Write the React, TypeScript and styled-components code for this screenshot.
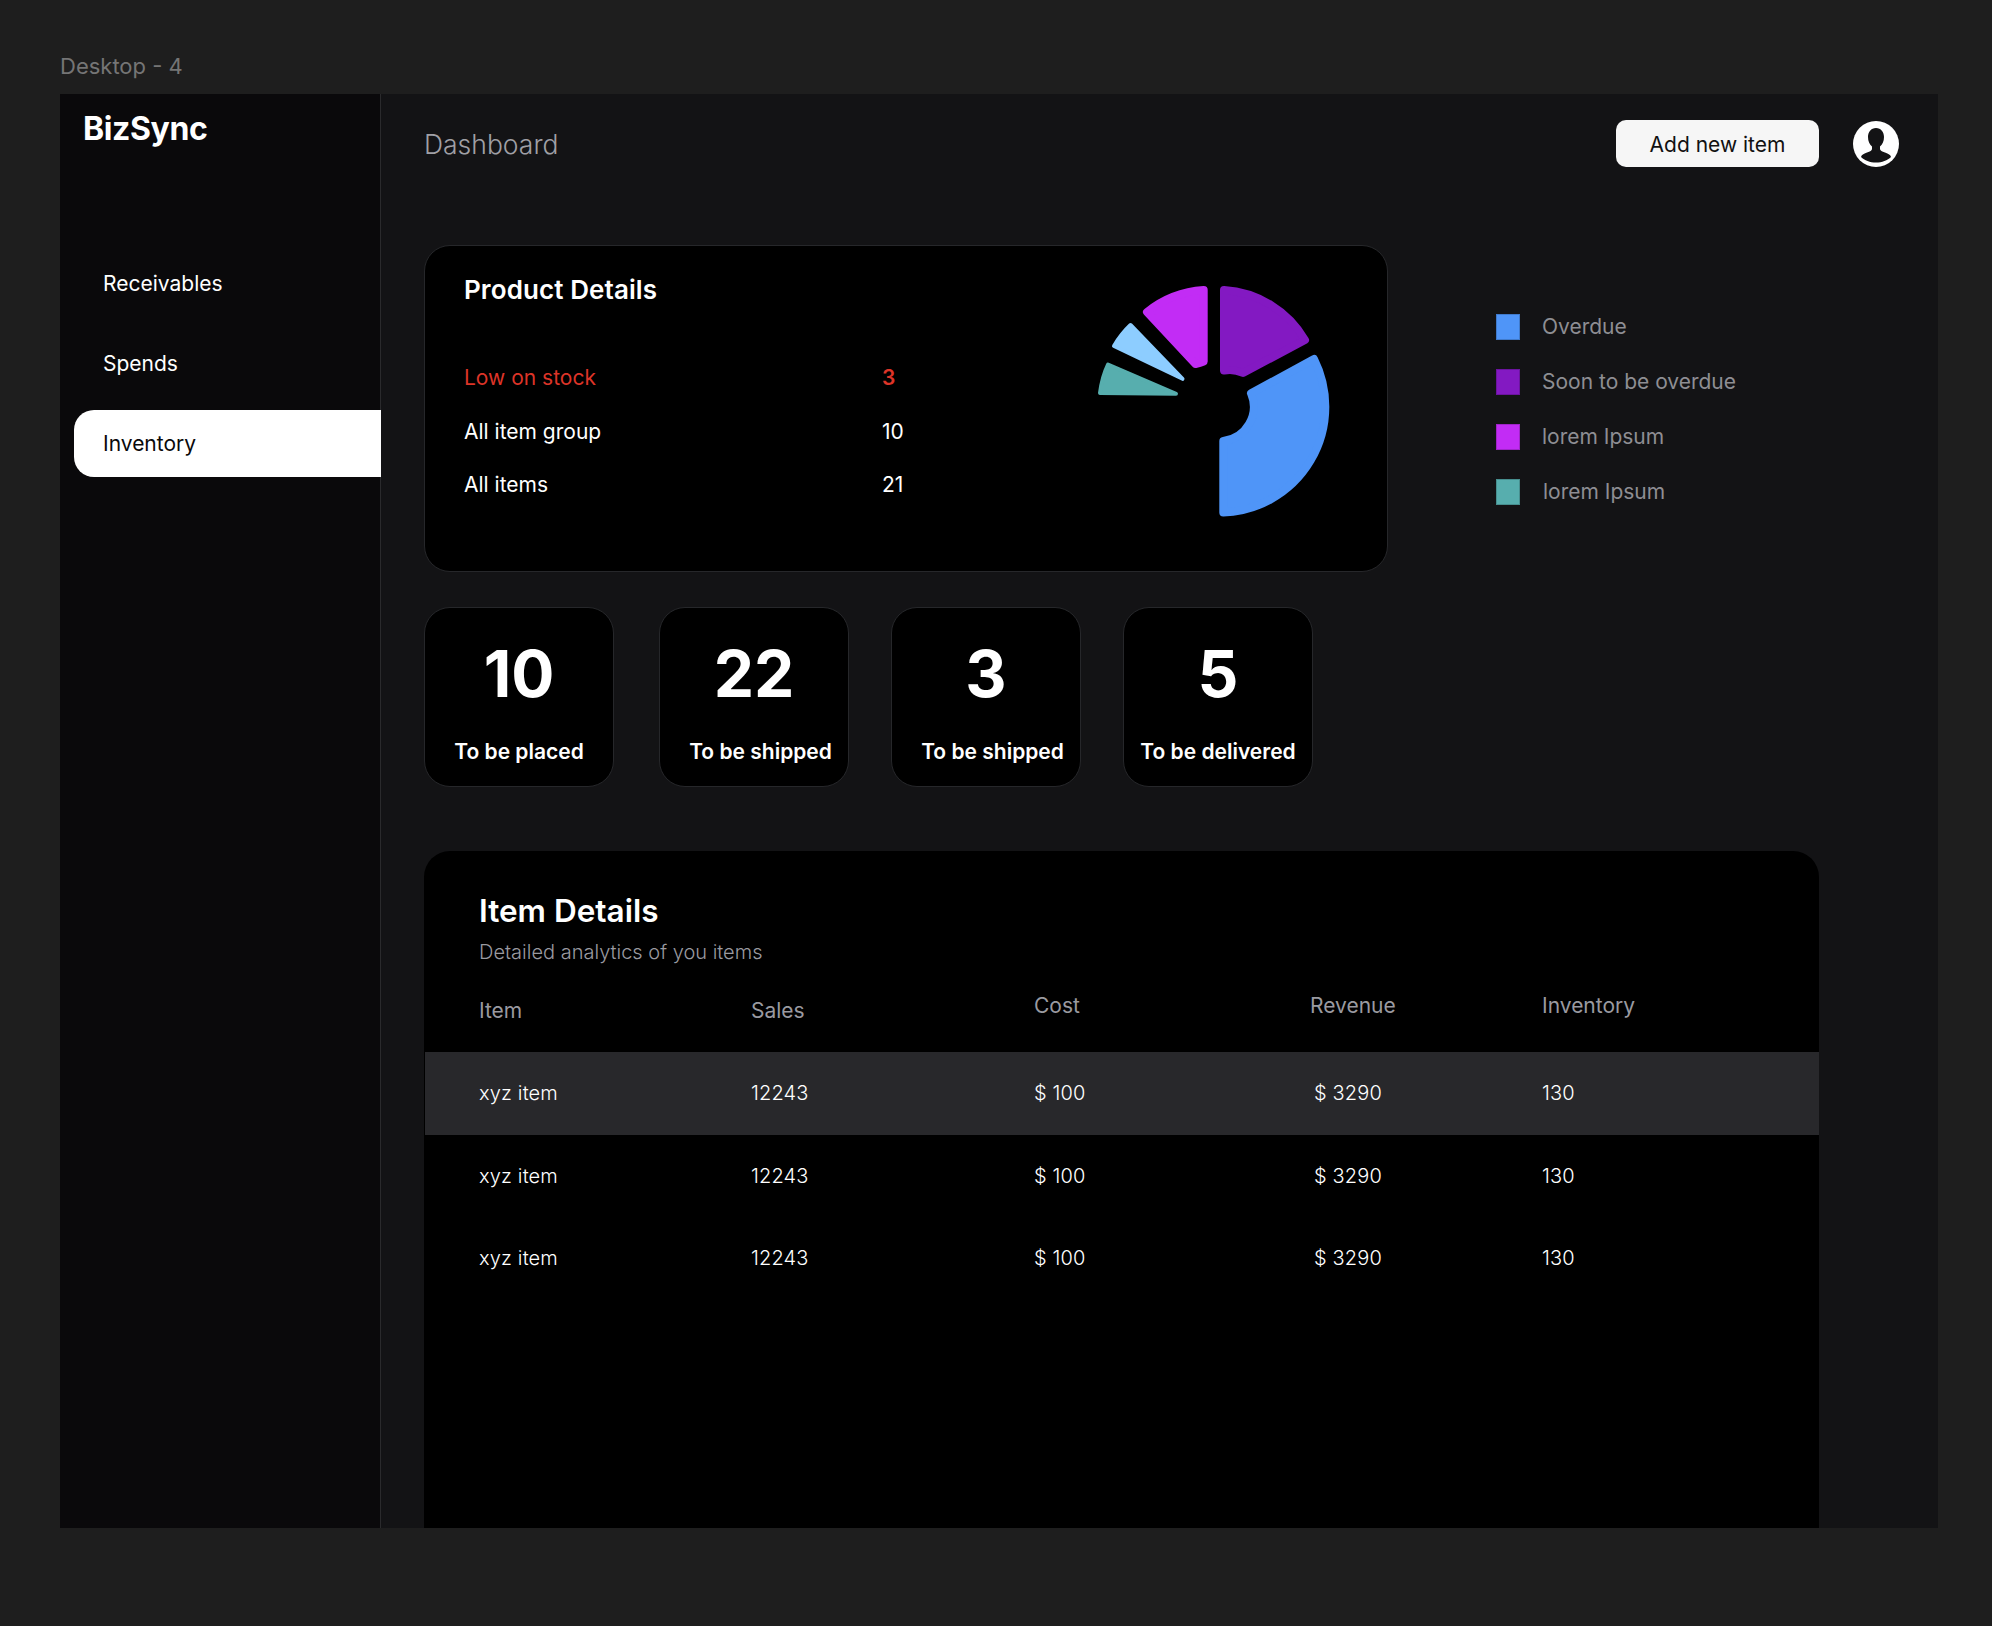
import React from 'react';
import styled, { createGlobalStyle } from 'styled-components';

const GlobalStyle = createGlobalStyle`
  html, body {
    margin: 0;
    padding: 0;
    background: #1e1e1e;
  }
  * {
    box-sizing: border-box;
  }
  body {
    font-family: Inter, "Liberation Sans", sans-serif;
  }
`;

const Page = styled.div`
  width: 1992px;
  height: 1626px;
  padding: 53px 54px 98px 60px;
  overflow: hidden;
`;

const FrameLabel = styled.div`
  height: 41px;
  font-size: 22px;
  line-height: 26px;
  color: #757575;
`;

const Frame = styled.div`
  display: flex;
  height: 1434px;
  background: #131315;
  overflow: hidden;
`;

const Sidebar = styled.aside`
  flex: 0 0 321px;
  background: #0a090b;
  border-right: 1px solid #2a2a2c;
  padding: 15px 0 0 14px;
`;

const Logo = styled.div`
  margin-left: 9px;
  font-size: 32px;
  line-height: 39px;
  font-weight: 700;
  letter-spacing: -0.4px;
  color: #fff;
`;

const Nav = styled.nav`
  display: flex;
  flex-direction: column;
  gap: 13px;
  margin-top: 102px;
  margin-right: -1px;
`;

const NavItem = styled.div<{ $active?: boolean }>`
  display: flex;
  align-items: center;
  height: 67px;
  padding-left: 29px;
  font-size: 21px;
  color: ${p => (p.$active ? '#0a090b' : '#fff')};
  background: ${p => (p.$active ? '#fff' : 'transparent')};
  border-radius: 20px 0 0 20px;
`;

const Main = styled.main`
  flex: 1;
  min-width: 0;
  padding: 26px 39px 0 43px;
`;

const Header = styled.header`
  display: flex;
  align-items: center;
  height: 47px;
`;

const PageTitle = styled.h1`
  flex: 1;
  margin: 0;
  font-size: 26.5px;
  font-weight: 300;
  color: #a0a0a6;
`;

const AddButton = styled.button`
  width: 203px;
  height: 47px;
  padding: 2px 0 0;
  border: 0;
  border-radius: 10px;
  background: #f6f6f6;
  color: #111;
  font-family: inherit;
  font-size: 21px;
`;

const Avatar = styled.svg`
  width: 46px;
  height: 46px;
  margin-left: 34px;
`;

const Overview = styled.section`
  display: flex;
  margin-top: 78px;
`;

const ProductCard = styled.div`
  display: flex;
  justify-content: space-between;
  width: 964px;
  height: 327px;
  padding: 14px 27px 0 39px;
  background: #000;
  border: 1px solid #26272a;
  border-radius: 26px;
`;

const ProductText = styled.div`
  padding-top: 14px;
`;

const CardTitle = styled.h2`
  margin: 0 0 45px;
  font-size: 26px;
  line-height: 32px;
  font-weight: 600;
  letter-spacing: 0.1px;
  color: #fff;
`;

const StockRow = styled.div<{ $alert?: boolean }>`
  display: grid;
  grid-template-columns: 418px 40px;
  align-items: center;
  height: 53.5px;
  font-size: 21px;
  color: ${p => (p.$alert ? '#dd3428' : '#fff')};
`;

const StockValue = styled.span<{ $alert?: boolean }>`
  font-weight: ${p => (p.$alert ? 600 : 400)};
`;

const PieChart = styled.svg`
  width: 300px;
  height: 270px;
`;

const Legend = styled.ul`
  display: flex;
  flex-direction: column;
  gap: 29px;
  margin: 69px 0 0 108px;
  padding: 0;
  list-style: none;
`;

const LegendItem = styled.li<{ $nudge?: boolean }>`
  display: flex;
  align-items: center;
  gap: ${p => (p.$nudge ? '23px' : '22px')};
  font-size: 21px;
  line-height: 26px;
  color: #8e8e93;
`;

const Swatch = styled.span<{ $color: string }>`
  width: 24px;
  height: 26px;
  background: ${p => p.$color};
  box-shadow: inset 0 0 0 1px rgba(0, 0, 0, 0.18);
`;

const StatsRow = styled.section`
  display: flex;
  margin-top: 35px;
`;

const StatCard = styled.div<{ $gap: number }>`
  display: flex;
  flex-direction: column;
  align-items: center;
  width: 190px;
  height: 180px;
  margin-right: ${p => p.$gap}px;
  padding-top: 28px;
  background: #000;
  border: 1px solid #26272a;
  border-radius: 26px;
`;

const StatNumber = styled.div`
  font-size: 64px;
  line-height: 76px;
  font-weight: 700;
  color: #fff;
`;

const StatLabel = styled.div<{ $shift?: boolean }>`
  margin-top: 26px;
  margin-left: ${p => (p.$shift ? '13px' : '0')};
  font-size: 21px;
  line-height: 28px;
  font-weight: 560;
  white-space: nowrap;
  color: #fff;
`;

const TableCard = styled.section`
  width: 1395px;
  height: 677px;
  margin-top: 64px;
  padding-top: 40px;
  background: #000;
  border-radius: 26px 26px 0 0;
`;

const TableHead = styled.div`
  padding-left: 55px;
`;

const TableTitle = styled.h2`
  margin: 0;
  font-size: 31.5px;
  line-height: 40px;
  font-weight: 600;
  color: #fff;
`;

const TableSub = styled.p`
  margin: 9px 0 0;
  font-size: 20px;
  line-height: 24px;
  font-weight: 300;
  color: #9a9aa0;
`;

const Row = styled.div<{ $header?: boolean; $active?: boolean }>`
  display: grid;
  grid-template-columns: 272px 283px 276px 232px 1fr;
  align-items: center;
  height: ${p => (p.$header ? '88px' : '82.5px')};
  margin-left: 1px;
  padding-left: 54px;
  padding-bottom: ${p => (p.$header ? '5px' : '0')};
  font-size: ${p => (p.$header ? '21px' : '20px')};
  font-weight: ${p => (p.$header ? 400 : 300)};
  letter-spacing: ${p => (p.$header ? '0' : '0.15px')};
  color: ${p => (p.$header ? '#9a9aa0' : '#fff')};
  background: ${p => (p.$active ? '#28282b' : 'transparent')};
`;

const Cell = styled.div<{ $drop?: boolean; $indent?: boolean }>`
  margin-top: ${p => (p.$drop ? '10px' : '0')};
  padding-left: ${p => (p.$indent ? '4px' : '0')};
`;

const stock = [
  { label: 'Low on stock', value: 3, alert: true },
  { label: 'All item group', value: 10 },
  { label: 'All items', value: 21 },
];

const legend = [
  { label: 'Overdue', color: '#4f95f8' },
  { label: 'Soon to be overdue', color: '#8319c2' },
  { label: 'lorem Ipsum', color: '#c22cf5' },
  { label: 'lorem Ipsum', color: '#57aeae', nudge: true },
];

const stats = [
  { value: 10, label: 'To be placed', gap: 45 },
  { value: 22, label: 'To be shipped', gap: 42, shift: true },
  { value: 3, label: 'To be shipped', gap: 42, shift: true },
  { value: 5, label: 'To be delivered', gap: 0 },
];

const slices = [
  { color: '#4f95f8', width: 8, d: 'M163.3 181V252.6A106 106 0 0 0 254 99L191 133.3A34.5 34.5 0 0 1 163.3 181Z' },
  { color: '#8319c2', width: 8, d: 'M164 30A101 101 0 0 1 245 80L183 113A30 30 0 0 0 164 110.5Z' },
  { color: '#c22cf5', width: 8, d: 'M143.7 30A101 101 0 0 0 87 52L135.5 104Q140 103 143.7 101.5Z' },
  { color: '#8dcdff', width: 4, d: 'M70.5 65Q61 74 54 86L122.5 118.8Z' },
  { color: '#57aeae', width: 4, d: 'M48 104.5Q42 117 40 133L116 133.8Z' },
];

export default function App() {
  return (
    <Page>
      <GlobalStyle />
      <FrameLabel>Desktop - 4</FrameLabel>
      <Frame>
        <Sidebar>
          <Logo>BizSync</Logo>
          <Nav>
            <NavItem>Receivables</NavItem>
            <NavItem>Spends</NavItem>
            <NavItem $active>Inventory</NavItem>
          </Nav>
        </Sidebar>
        <Main>
          <Header>
            <PageTitle>Dashboard</PageTitle>
            <AddButton>Add new item</AddButton>
            <Avatar viewBox="0 0 46 46">
              <circle cx="23" cy="23" r="23" fill="#fff" />
              <path
                fill="#131315"
                d="M23 7C18 7 15 11 15 16C15 20 16.5 23.5 19 25.5V28C19 29.5 17 30.5 14 31.5C10.5 32.7 8.5 34 8 36C11.5 39.5 17 41.5 23 41.5C29 41.5 34.5 39.5 38 36C37.5 34 35.5 32.7 32 31.5C29 30.5 27 29.5 27 28V25.5C29.5 23.5 31 20 31 16C31 11 28 7 23 7Z"
              />
            </Avatar>
          </Header>

          <Overview>
            <ProductCard>
              <ProductText>
                <CardTitle>Product Details</CardTitle>
                {stock.map(row => (
                  <StockRow key={row.label} $alert={row.alert}>
                    <span>{row.label}</span>
                    <StockValue $alert={row.alert}>{row.value}</StockValue>
                  </StockRow>
                ))}
              </ProductText>
              <PieChart viewBox="0 0 300 270">
                {slices.map(slice => (
                  <path
                    key={slice.color}
                    d={slice.d}
                    fill={slice.color}
                    stroke={slice.color}
                    strokeWidth={slice.width}
                    strokeLinejoin="round"
                  />
                ))}
              </PieChart>
            </ProductCard>
            <Legend>
              {legend.map((item, idx) => (
                <LegendItem key={idx} $nudge={item.nudge}>
                  <Swatch $color={item.color} />
                  {item.label}
                </LegendItem>
              ))}
            </Legend>
          </Overview>

          <StatsRow>
            {stats.map((item, idx) => (
              <StatCard key={idx} $gap={item.gap}>
                <StatNumber>{item.value}</StatNumber>
                <StatLabel $shift={item.shift}>{item.label}</StatLabel>
              </StatCard>
            ))}
          </StatsRow>

          <TableCard>
            <TableHead>
              <TableTitle>Item Details</TableTitle>
              <TableSub>Detailed analytics of you items</TableSub>
            </TableHead>
            <Row $header>
              <Cell $drop>Item</Cell>
              <Cell $drop>Sales</Cell>
              <Cell>Cost</Cell>
              <Cell>Revenue</Cell>
              <Cell>Inventory</Cell>
            </Row>
            {[0, 1, 2].map(idx => (
              <Row key={idx} $active={idx === 0}>
                <Cell>xyz item</Cell>
                <Cell>12243</Cell>
                <Cell>$ 100</Cell>
                <Cell $indent>$ 3290</Cell>
                <Cell>130</Cell>
              </Row>
            ))}
          </TableCard>
        </Main>
      </Frame>
    </Page>
  );
}
